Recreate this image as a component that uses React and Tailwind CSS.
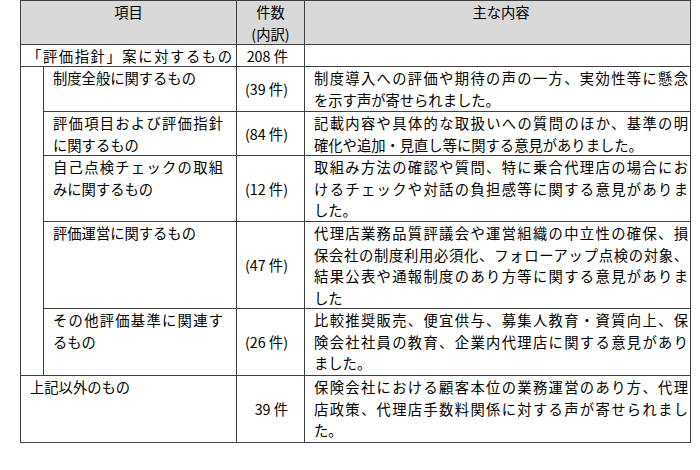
import React from 'react';

const jp = { fontFamily: '"Noto Sans CJK JP", sans-serif' };
const num = { fontFamily: '"Liberation Sans Narrow", "Noto Sans CJK JP", sans-serif' };

// one printed line; every line but the last of a cell is stretched to the full width
const Lines = ({ lines }) => (
  <>
    {lines.map((t, i) => (
      <div key={i} className={i < lines.length - 1 ? 'text-justify [text-align-last:justify]' : ''}>{t}</div>
    ))}
  </>
);

const rows = [
  {
    item: ['制度全般に関するもの'],
    count: '(39 件)',
    body: ['制度導入への評価や期待の声の一方、実効性等に懸念', 'を示す声が寄せられました。'],
  },
  {
    item: ['評価項目および評価指針', 'に関するもの'],
    count: '(84 件)',
    body: ['記載内容や具体的な取扱いへの質問のほか、基準の明', '確化や追加・見直し等に関する意見がありました。'],
  },
  {
    item: ['自己点検チェックの取組', 'みに関するもの'],
    count: '(12 件)',
    body: ['取組み方法の確認や質問、特に乗合代理店の場合にお', 'けるチェックや対話の負担感等に関する意見がありま', 'した。'],
  },
  {
    item: ['評価運営に関するもの'],
    count: '(47 件)',
    body: [
      '代理店業務品質評議会や運営組織の中立性の確保、損',
      '保会社の制度利用必須化、フォローアップ点検の対象、',
      '結果公表や通報制度のあり方等に関する意見がありま',
      'した',
    ],
  },
  {
    item: ['その他評価基準に関連す', 'るもの'],
    count: '(26 件)',
    body: ['比較推奨販売、便宜供与、募集人教育・資質向上、保', '険会社社員の教育、企業内代理店に関する意見があり', 'ました。'],
  },
];

export default function App() {
  return (
    <div className="bg-white w-[700px] h-[470px] text-black text-[14.3px] leading-[21.7px]" style={jp}>
      <div className="ml-[20px] w-[671px] grid grid-cols-[22px_192px_67px_385px] grid-rows-[43px_21px_44px_43px_65px_86px_66px_66px] gap-px p-px bg-[#404040]">
        {/* header */}
        <div className="col-span-2 bg-[#d9d9d9] text-center">項目</div>
        <div className="bg-[#d9d9d9] text-center">
          <div>件数</div>
          <div><span style={num}>(</span>内訳<span style={num}>)</span></div>
        </div>
        <div className="bg-[#d9d9d9] text-center pl-[9px] pr-[2px]">主な内容</div>

        {/* total */}
        <div className="col-span-2 bg-white pl-[6px] pr-[4px] text-justify [text-align-last:justify]">「評価指針」案に対するもの</div>
        <div className="bg-white flex items-center justify-end pr-[16px]" style={num}>208 件</div>
        <div className="bg-white" />

        <div className="row-span-5 bg-white" />
        {rows.map((r, i) => (
          <React.Fragment key={i}>
            <div className="bg-white pl-[9px] pr-[13px]"><Lines lines={r.item} /></div>
            <div className="bg-white flex items-center justify-end pr-[16px]" style={num}>{r.count}</div>
            <div className="bg-white pl-[9px] pr-[2px]"><Lines lines={r.body} /></div>
          </React.Fragment>
        ))}

        <div className="col-span-2 bg-white pl-[9px]">上記以外のもの</div>
        <div className="bg-white flex items-center justify-end pr-[16px]" style={num}>39 件</div>
        <div className="bg-white pl-[9px] pr-[2px]">
          <Lines lines={['保険会社における顧客本位の業務運営のあり方、代理', '店政策、代理店手数料関係に対する声が寄せられまし', 'た。']} />
        </div>
      </div>
    </div>
  );
}
